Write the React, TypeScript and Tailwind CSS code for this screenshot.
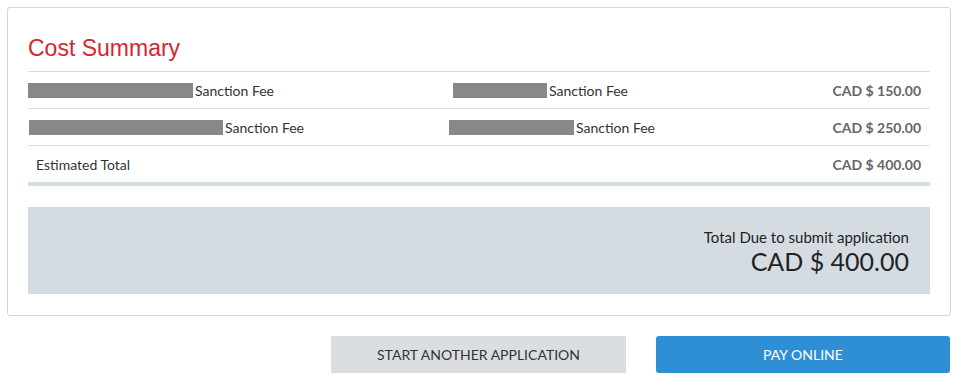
import React from "react";

const rows = [
  { a: 165, pad: 0, b: 94, bStart: 453, amount: "CAD $ 150.00" },
  { a: 194, pad: 1, b: 125, bStart: 449, amount: "CAD $ 250.00" },
];

export default function App() {
  return (
    <div className="w-[964px] h-[386px] bg-white font-['Lato','Noto_Sans',sans-serif] text-[#333]">
      <div className="pt-[7px] pl-[7px] pr-[13px]">
        {/* Summary card */}
        <div className="border border-[#d4d4d4] rounded-[3px] px-5 pt-[27px] pb-[21px]">
          <h2 className="font-['Liberation_Sans',Arial,sans-serif] text-[23px] leading-[26px] text-[#d62631] mb-[10px]">
            Cost Summary
          </h2>

          <div className="text-[14px]">
            {rows.map((row, i) => (
              <div
                key={i}
                className="h-[37px] border-t border-[#dcdcdc] flex items-center"
              >
                <div className="w-[421px] flex items-center" style={{ paddingLeft: row.pad }}>
                  <span className="h-[15px] bg-[#888]" style={{ width: row.a }} />
                  <span className="ml-[2px]">Sanction Fee</span>
                </div>
                <div
                  className="flex items-center flex-1"
                  style={{ paddingLeft: row.bStart - 449 }}
                >
                  <span className="h-[15px] bg-[#888]" style={{ width: row.b }} />
                  <span className="ml-[2px]">Sanction Fee</span>
                </div>
                <span className="font-bold text-[#666] pr-[9px]">{row.amount}</span>
              </div>
            ))}
            <div className="h-[37px] border-t border-[#dcdcdc] flex items-center justify-between pl-2">
              <span>Estimated Total</span>
              <span className="font-bold text-[#666] pr-[9px]">CAD $ 400.00</span>
            </div>
            <div className="h-[4px] bg-[#d4dde2]" />
          </div>

          {/* Total due */}
          <div className="mt-[21px] h-[87px] bg-[#d4dce2] flex flex-col items-end justify-center pr-[21px] pt-[2px] text-[#222]">
            <span className="text-[15px] leading-[18px]">Total Due to submit application</span>
            <span className="text-[25px] leading-[30px]">CAD $ 400.00</span>
          </div>
        </div>

        {/* Actions */}
        <div className="mt-[20px] flex justify-end gap-[30px] pr-[1px]">
          <button className="w-[295px] h-[37px] bg-[#dadee1] text-[14px] text-[#333]">
            START ANOTHER APPLICATION
          </button>
          <button className="w-[294px] h-[37px] bg-[#2f8fd5] rounded-[3px] text-[14px] text-white">
            PAY ONLINE
          </button>
        </div>
      </div>
    </div>
  );
}
